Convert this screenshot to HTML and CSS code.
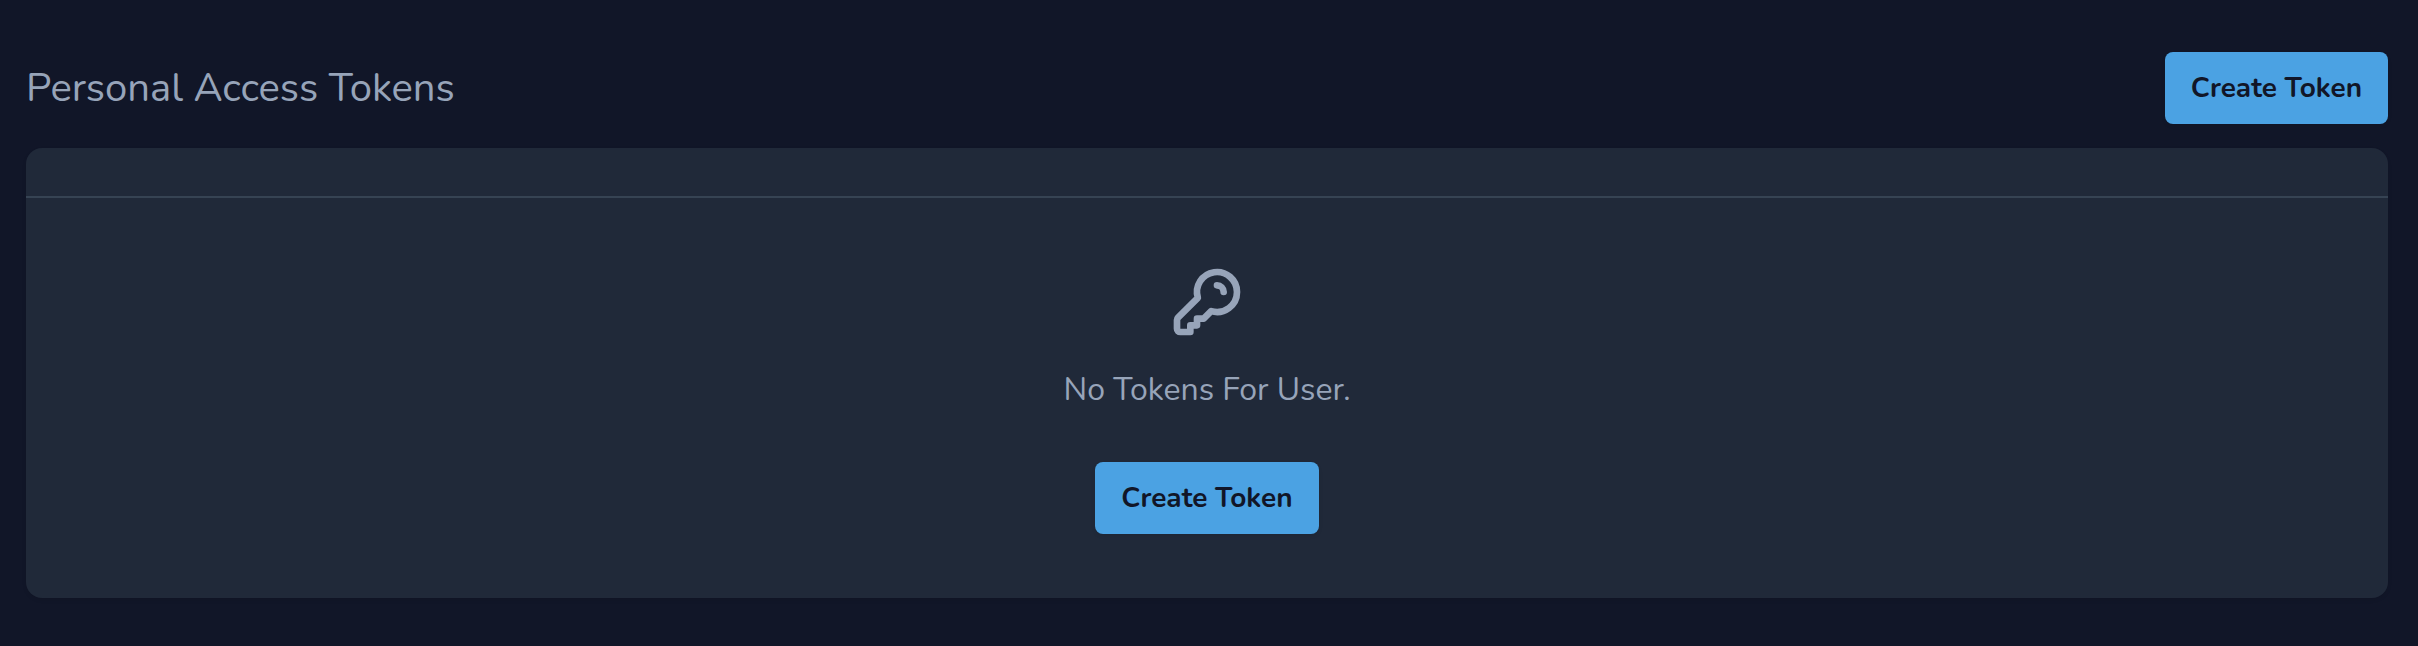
FILE: index.html
```html
<!DOCTYPE html>
<html lang="en">
<head>
<meta charset="utf-8">
<title>Personal Access Tokens</title>
<link rel="stylesheet" href="styles.css">
</head>
<body>
<main class="page">
  <header class="header">
    <h1 class="title">Personal Access Tokens</h1>
    <button class="button button-header" type="button">Create Token</button>
  </header>
  <section class="card">
    <div class="toolbar"></div>
    <div class="empty">
      <svg class="key" viewBox="0 0 24 24" fill="none" stroke="currentColor" stroke-width="2" stroke-linecap="round" stroke-linejoin="round" aria-hidden="true"><path d="M15 7a2 2 0 012 2m4 0a6 6 0 01-7.743 5.743L11 17H9v2H7v2H4a1 1 0 01-1-1v-2.586a1 1 0 01.293-.707l5.964-5.964A6 6 0 1121 9z"/></svg>
      <h2 class="message">No Tokens For User.</h2>
      <button class="button" type="button">Create Token</button>
    </div>
  </section>
</main>
</body>
</html>
```
FILE: styles.css
```css
* { box-sizing: border-box; }
body {
  margin: 0;
  background: #111628;
  color: #97a4b9;
  font-family: Nunito, Lato, sans-serif;
}
.page { height: 646px; padding: 52px 30px 48px 26px; }
.header {
  display: flex;
  align-items: center;
  justify-content: space-between;
  height: 72px;
  margin-bottom: 24px;
}
.title { margin: 0; font-size: 40px; line-height: 52px; font-weight: 400; }
.button {
  display: flex;
  align-items: center;
  justify-content: center;
  width: 224px;
  height: 72px;
  padding: 0;
  border: 0;
  border-radius: 8px;
  background: #4ba2e3;
  color: #111628;
  font: 700 28px/40px Nunito, Lato, sans-serif;
  box-shadow: 0 2px 4px rgba(0, 0, 0, 0.08);
}
.button-header { width: 223px; }
.card {
  height: 450px;
  overflow: hidden;
  border-radius: 16px;
  background: #202939;
  box-shadow: 0 2px 4px rgba(0, 0, 0, 0.08);
}
.toolbar { height: 50px; border-bottom: 2px solid #364353; }
.empty {
  display: flex;
  flex-direction: column;
  align-items: center;
  padding-top: 64px;
}
.key { width: 80px; height: 80px; }
.message { margin: 24px 0 48px; font-size: 32px; line-height: 48px; font-weight: 400; }
```
